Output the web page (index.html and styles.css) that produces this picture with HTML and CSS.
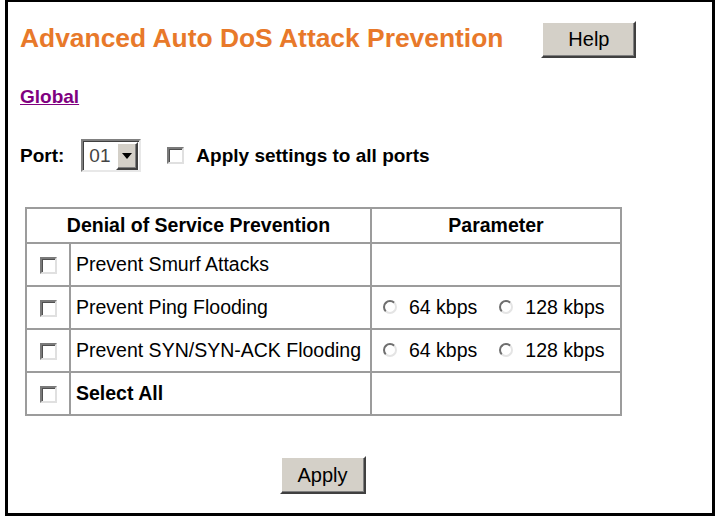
FILE: index.html
```html
<!DOCTYPE html>
<html>
<head>
<meta charset="utf-8">
<title>Advanced Auto DoS Attack Prevention</title>
<link rel="stylesheet" href="styles.css">
</head>
<body>
<div class="frame">
  <div class="title-row">
    <h1 class="title">Advanced Auto DoS Attack Prevention</h1>
    <span class="btn btn-help">Help</span>
  </div>
  <div class="global-row"><a class="global" href="#">Global</a></div>
  <div class="port-row">
    <span class="port-label">Port:</span>
    <span class="select"><span class="select-val">01</span><span class="select-arrow"><span class="tri"></span></span></span>
    <span class="cbox cbox-port"></span>
    <span class="apply-all">Apply settings to all ports</span>
  </div>
  <div class="content">
    <table class="grid">
      <colgroup><col class="c1"><col class="c2"><col class="c3"></colgroup>
      <tr class="head">
        <th colspan="2">Denial of Service Prevention</th>
        <th>Parameter</th>
      </tr>
      <tr class="r1">
        <td class="cb"><span class="cbox"></span></td>
        <td class="name">Prevent Smurf Attacks</td>
        <td class="param"></td>
      </tr>
      <tr class="r2">
        <td class="cb"><span class="cbox"></span></td>
        <td class="name">Prevent Ping Flooding</td>
        <td class="param"><span class="opt"><span class="radio"></span>64 kbps</span><span class="opt opt2"><span class="radio"></span>128 kbps</span></td>
      </tr>
      <tr class="r3">
        <td class="cb"><span class="cbox"></span></td>
        <td class="name">Prevent SYN/SYN-ACK Flooding</td>
        <td class="param"><span class="opt"><span class="radio"></span>64 kbps</span><span class="opt opt2"><span class="radio"></span>128 kbps</span></td>
      </tr>
      <tr class="r4">
        <td class="cb"><span class="cbox"></span></td>
        <td class="name bold">Select All</td>
        <td class="param"></td>
      </tr>
    </table>
    <div class="apply-row"><span class="btn btn-apply">Apply</span></div>
  </div>
</div>
</body>
</html>
```

FILE: styles.css
```css
html, body {
  margin: 0;
  padding: 0;
  background: #ffffff;
}
body {
  font-family: "Liberation Sans", Arial, sans-serif;
  color: #000;
}
.frame {
  margin-left: 5px;
  width: 710px;
  height: 516px;
  box-sizing: border-box;
  border: 3px solid #000;
  border-top-width: 2px;
  padding: 19px 0 0 12px;
}
.title-row {
  display: flex;
  align-items: center;
  height: 37px;
}
.title {
  margin: 0;
  font-size: 26.4px;
  font-weight: bold;
  color: #e8792a;
  line-height: 30px;
  margin-top: -3px;
}
.btn {
  display: inline-flex;
  align-items: center;
  justify-content: center;
  box-sizing: border-box;
  background: #d4d0c8;
  border: 2px solid;
  border-color: #ffffff #404040 #404040 #ffffff;
  box-shadow: inset -1px -1px 0 #808080;
  font-size: 20px;
  color: #000;
}
.btn-help {
  margin-left: 38px;
  width: 95px;
  height: 37px;
}
.global-row {
  margin-top: 28px;
  height: 22px;
  line-height: 22px;
}
.global {
  font-size: 19px;
  font-weight: bold;
  color: #800080;
  text-decoration: underline;
}
.port-row {
  margin-top: 31px;
  display: flex;
  align-items: center;
  height: 33px;
}
.port-label {
  font-size: 19px;
  font-weight: bold;
}
.select {
  margin-left: 17px;
  width: 60px;
  height: 33px;
  box-sizing: border-box;
  border: 2px solid;
  border-color: #808080 #e8e8e8 #e8e8e8 #808080;
  box-shadow: inset 1px 1px 0 #404040;
  background: #fff;
  display: flex;
  align-items: center;
  justify-content: space-between;
  padding: 1px 1px 1px 6px;
}
.select-val {
  font-size: 19px;
  color: #444;
}
.select-arrow {
  width: 22px;
  height: 28px;
  box-sizing: border-box;
  background: #d4d0c8;
  border: 2px solid;
  border-color: #ffffff #404040 #404040 #ffffff;
  box-shadow: inset -1px -1px 0 #808080;
  display: flex;
  align-items: center;
  justify-content: center;
}
.tri {
  width: 0;
  height: 0;
  border-left: 5px solid transparent;
  border-right: 5px solid transparent;
  border-top: 6px solid #000;
}
.cbox {
  display: inline-block;
  width: 17px;
  height: 17px;
  box-sizing: border-box;
  background: #fff;
  border: 2px solid;
  border-color: #7a7a7a #e0e0e0 #e0e0e0 #7a7a7a;
  box-shadow: inset 1px 1px 0 #505050;
  vertical-align: middle;
}
.cbox-port {
  margin-left: 26px;
}
.apply-all {
  margin-left: 12px;
  font-size: 19px;
  font-weight: bold;
}
.content {
  margin-top: 35px;
  margin-left: 5px;
  width: 595px;
}
.grid {
  width: 595px;
  table-layout: fixed;
  border-collapse: collapse;
  border: 2px solid #9c9c9c;
}
.c1 { width: 44px; }
.c2 { width: 301px; }
.c3 { width: 250px; }
.grid th, .grid td {
  border: 2px solid #9c9c9c;
  padding: 0;
  font-size: 19.5px;
}
.grid th {
  font-weight: bold;
  text-align: center;
  height: 33px;
}
.grid td {
  height: 41px;
}
.cb {
  text-align: center;
}
.name {
  padding-left: 5px !important;
  white-space: nowrap;
}
.bold {
  font-weight: bold;
}
.param {
  padding-left: 11px !important;
  white-space: nowrap;
}
.opt {
  display: inline-flex;
  align-items: center;
}
.opt2 {
  margin-left: 22px;
}
.radio {
  display: inline-block;
  width: 14px;
  height: 14px;
  box-sizing: border-box;
  border-radius: 50%;
  border: 2px solid;
  border-color: #6e6e6e #e4e4e4 #e4e4e4 #6e6e6e;
  background: #fff;
  margin-right: 12px;
}
.apply-row {
  margin-top: 40px;
  display: flex;
  justify-content: center;
}
.btn-apply {
  width: 86px;
  height: 38px;
}
```
